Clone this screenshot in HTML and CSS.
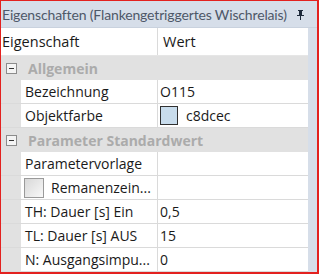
FILE: index.html
```html
<!DOCTYPE html>
<html lang="de">
<head>
  <meta charset="UTF-8" />
  <title>Eigenschaften</title>
  <link rel="stylesheet" href="styles.css">
</head>
<body>
  <div class="panel">
    <div class="titlebar">
      <span class="title">Eigenschaften (Flankengetriggertes Wischrelais)</span>
      <svg class="pin" width="9" height="10" viewBox="0 0 9 10">
        <path d="M2 0h5v1h-1v4h2v1H1V5h2V1H2z M4 6h1v4H4z" fill="#1e2a3a"/>
      </svg>
    </div>
    <div class="body">
      <div class="grid">
        <div class="row header">
          <div class="name">Eigenschaft</div>
          <div class="value">Wert</div>
        </div>

        <div class="row category">
          <span class="toggle"></span>
          <span>Allgemein</span>
        </div>
        <div class="row">
          <div class="gutter"></div>
          <div class="name">Bezeichnung</div>
          <div class="value">O115</div>
        </div>
        <div class="row">
          <div class="gutter"></div>
          <div class="name">Objektfarbe</div>
          <div class="value"><span class="swatch"></span>c8dcec</div>
        </div>

        <div class="row category">
          <span class="toggle"></span>
          <span>Parameter Standardwert</span>
        </div>
        <div class="row">
          <div class="gutter"></div>
          <div class="name">Parametervorlage</div>
          <div class="value"></div>
        </div>
        <div class="row">
          <div class="gutter"></div>
          <div class="name"><span class="check"></span>Remanenzein...</div>
          <div class="value"></div>
        </div>
        <div class="row">
          <div class="gutter"></div>
          <div class="name">TH: Dauer [s] Ein</div>
          <div class="value">0,5</div>
        </div>
        <div class="row">
          <div class="gutter"></div>
          <div class="name">TL: Dauer [s] AUS</div>
          <div class="value">15</div>
        </div>
        <div class="row">
          <div class="gutter"></div>
          <div class="name">N: Ausgangsimpu...</div>
          <div class="value">0</div>
        </div>
      </div>
      <div class="scroll"></div>
    </div>
  </div>
</body>
</html>
```

FILE: styles.css
```css
body {
  margin: 0;
  background: #ffffff;
  font-family: "Open Sans", "Noto Sans", sans-serif;
  font-size: 14px;
  color: #1a1a1a;
}
.panel {
  width: 316px;
  border-left: 1px solid #e3211f;
  border-top: 1px solid #e3211f;
  border-right: 2px solid #e3211f;
  border-bottom: 2px solid #e3211f;
  background: #d6dee9;
}
.titlebar {
  height: 26px;
  display: flex;
  align-items: center;
  justify-content: space-between;
  padding: 0 12px 0 1px;
  color: #4e5868;
  border-bottom: 1px solid #c9d2de;
}
.title {
  font-family: "Lato", sans-serif;
  font-size: 14px;
  letter-spacing: -0.15px;
  white-space: nowrap;
}
.pin { flex-shrink: 0; margin-top: 1px; }
.body { display: flex; }
.grid { flex: 1; background: #ffffff; }
.scroll { width: 9px; background: #d6dee9; }
.row {
  display: flex;
  height: 23px;
  border-bottom: 1px solid #dadada;
  align-items: stretch;
}
.row > div { display: flex; align-items: center; }
.gutter { width: 20px; background: #e1e1e1; }
.name {
  width: 132px;
  padding-left: 4px;
  border-right: 1px solid #dadada;
  white-space: nowrap;
  overflow: hidden;
}
.value { flex: 1; padding-left: 2px; }
.header { height: 27px; border-bottom: 1px solid #e6e6e6; }
.header .name { width: 155px; padding-left: 1px; font-size: 14.5px; }
.header .value { padding-left: 5px; font-size: 14.5px; }
.category {
  background: #e1e1e1;
  border-bottom: none;
  height: 24px;
  align-items: center;
  font-weight: bold;
  color: #ababab;
}
.toggle {
  position: relative;
  width: 9px;
  height: 9px;
  margin: 0 11px 0 5px;
  border: 1px solid #8c8c8c;
  background: #f4f4f4;
}
.toggle::after {
  content: "";
  position: absolute;
  left: 2px;
  top: 4px;
  width: 5px;
  height: 1px;
  background: #333;
}
.swatch {
  width: 16px;
  height: 17px;
  margin-right: 8px;
  border: 1px solid #303030;
  background: #c8dcec;
}
.check {
  width: 18px;
  height: 18px;
  margin: 0 7px 0 -1px;
  border: 1px solid #9a9a9a;
  background: linear-gradient(135deg, #d8d8d8, #f8f8f8);
}
```
